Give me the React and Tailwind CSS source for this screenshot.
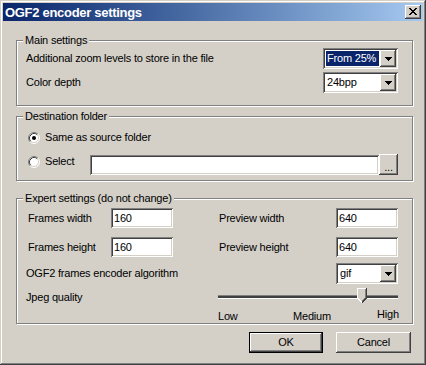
import React from "react";

const raised =
  "shadow-[inset_-1px_-1px_#404040,inset_1px_1px_#ffffff,inset_-2px_-2px_#808080,inset_2px_2px_#d4d0c8]";
const sunken =
  "shadow-[inset_1px_1px_#808080,inset_-1px_-1px_#ffffff,inset_2px_2px_#404040,inset_-2px_-2px_#d4d0c8]";

function Group({ title, className, children }) {
  return (
    <div
      className={`relative ml-[13px] w-[397px] border border-[#808080] shadow-[inset_1px_1px_#ffffff,1px_1px_#ffffff] ${className}`}
    >
      <span className="absolute -top-[8px] left-[6px] bg-[#d4d0c8] px-[2px] leading-[14px]">{title}</span>
      {children}
    </div>
  );
}

function DropArrow() {
  return (
    <div className={`flex h-full w-[16px] items-center justify-center bg-[#d4d0c8] ${raised}`}>
      <svg width="7" height="4" viewBox="0 0 7 4" shapeRendering="crispEdges">
        <path d="M0 0h7v1H0zM1 1h5v1H1zM2 2h3v1H2zM3 3h1v1H3z" fill="#000" />
      </svg>
    </div>
  );
}

function Combo({ value, selected, width }) {
  return (
    <div className={`flex h-[21px] bg-white p-[2px] ${sunken} ${width}`}>
      <div className="flex min-w-0 flex-1 items-center px-[1px]">
        <span
          className={`flex h-[15px] flex-1 items-center px-[1px] ${
            selected ? "bg-[#0a246a] text-white" : "text-black"
          }`}
        >
          {value}
        </span>
      </div>
      <DropArrow />
    </div>
  );
}

function TextBox({ value, width }) {
  return (
    <div className={`flex h-[20px] items-center bg-white px-[3px] ${sunken} ${width}`}>
      <span>{value}</span>
    </div>
  );
}

function Radio({ checked }) {
  return (
    <svg width="12" height="12" viewBox="0 0 12 12" className="shrink-0">
      <circle cx="6" cy="6" r="5" fill="#fff" />
      <path d="M2.11 9.89A5.5 5.5 0 0 1 9.89 2.11" stroke="#808080" fill="none" />
      <path d="M9.89 2.11A5.5 5.5 0 0 1 2.11 9.89" stroke="#ffffff" fill="none" />
      <path d="M2.82 9.18A4.5 4.5 0 0 1 9.18 2.82" stroke="#404040" fill="none" />
      <path d="M9.18 2.82A4.5 4.5 0 0 1 2.82 9.18" stroke="#d4d0c8" fill="none" />
      {checked ? <circle cx="6" cy="6" r="2" fill="#000" /> : null}
    </svg>
  );
}

function Button({ label, isDefault, width }) {
  return (
    <div className={`h-[21px] ${width} ${isDefault ? "border border-black" : ""}`}>
      <div className={`flex h-full w-full items-center justify-center bg-[#d4d0c8] ${raised}`}>{label}</div>
    </div>
  );
}

export default function App() {
  return (
    <div className="h-[365px] w-[426px] bg-[#d4d0c8] p-[3px] font-['Liberation_Sans',Arial,sans-serif] text-[11px] leading-[13px] tracking-[-0.2px] text-black shadow-[inset_-1px_-1px_#404040,inset_1px_1px_#d4d0c8,inset_-2px_-2px_#808080,inset_2px_2px_#ffffff]">
      <div className="flex h-[18px] items-center justify-between bg-linear-to-r from-[#0a246a] to-[#a6caf0] pl-[2px] pr-[2px]">
        <span className="text-[13px] font-bold tracking-[-0.3px] text-white">OGF2 encoder settings</span>
        <div className={`flex h-[14px] w-[16px] items-center justify-center bg-[#d4d0c8] ${raised}`}>
          <svg width="8" height="7" viewBox="0 0 8 7" shapeRendering="crispEdges" className="-mt-[1px]">
            <path
              d="M0 0h2v1H0zM6 0h2v1H6zM1 1h2v1H1zM5 1h2v1H5zM2 2h4v1H2zM3 3h2v1H3zM2 4h4v1H2zM1 5h2v1H1zM5 5h2v1H5zM0 6h2v1H0zM6 6h2v1H6z"
              fill="#000"
            />
          </svg>
        </div>
      </div>

      <Group title="Main settings" className="mt-[19px] h-[66px] pl-[9px] pr-[14px] pt-[7px]">
        <div className="flex h-[21px] items-center justify-between">
          <span>Additional zoom levels to store in the file</span>
          <Combo value="From 25%" selected width="w-[75px]" />
        </div>
        <div className="mt-[3px] flex h-[21px] items-center justify-between">
          <span>Color depth</span>
          <Combo value="24bpp" width="w-[75px]" />
        </div>
      </Group>

      <Group title="Destination folder" className="mt-[10px] h-[65px] pl-[11px] pt-[14px]">
        <div className="flex h-[13px] items-center gap-[5px]">
          <Radio checked />
          <span>Same as source folder</span>
        </div>
        <div className="mt-[10px] flex h-[21px] items-start">
          <div className="mt-[1px] flex h-[13px] items-center gap-[5px]">
            <Radio />
            <span className="w-[45px]">Select</span>
          </div>
          <div className={`mt-[1px] h-[20px] w-[289px] bg-white ${sunken}`} />
          <div className={`flex h-[21px] w-[19px] items-end justify-center bg-[#d4d0c8] pb-[4px] leading-[8px] ${raised}`}>
            <span className="text-[11px]">...</span>
          </div>
        </div>
      </Group>

      <Group title="Expert settings (do not change)" className="mt-[17px] h-[126px] pl-[9px] pt-[9px]">
        <div className="flex h-[20px] items-center">
          <span className="w-[85px] pl-[2px]">Frames width</span>
          <TextBox value="160" width="w-[62px]" />
          <span className="ml-[46px] w-[117px]">Preview width</span>
          <TextBox value="640" width="w-[62px]" />
        </div>
        <div className="mt-[9px] flex h-[20px] items-center">
          <span className="w-[85px] pl-[2px]">Frames height</span>
          <TextBox value="160" width="w-[62px]" />
          <span className="ml-[46px] w-[117px]">Preview height</span>
          <TextBox value="640" width="w-[62px]" />
        </div>
        <div className="mt-[6px] flex h-[21px] items-center">
          <span className="w-[310px]">OGF2 frames encoder algorithm</span>
          <Combo value="gif" width="w-[62px]" />
        </div>
        <div className="mt-[6px] flex h-[14px] items-center">
          <span className="w-[192px]">Jpeg quality</span>
          <div className="relative h-[14px] w-[180px]">
            <div className="mt-[5px] h-[3px] w-full border-t border-[#808080] bg-[#404040] shadow-[0_1px_#ffffff]" />
            <svg
              width="10"
              height="15"
              viewBox="0 0 10 15"
              shapeRendering="crispEdges"
              className="absolute left-[139px] -top-[2px]"
            >
              <path d="M0 0h10v10l-5 5l-5-5z" fill="#d4d0c8" />
              <path d="M0.5 10V0.5H9" stroke="#ffffff" fill="none" />
              <path d="M9.5 0v10l-4.5 4.5" stroke="#404040" fill="none" />
              <path d="M8.5 1v8.6l-3.5 3.5" stroke="#808080" fill="none" />
              <path d="M0.5 10l4.5 4.5" stroke="#ffffff" fill="none" />
            </svg>
          </div>
        </div>
        <div className="mt-[5px] flex h-[14px] items-center pl-[192px]">
          <span className="w-[75px]">Low</span>
          <span className="w-[84px]">Medium</span>
          <span className="-mt-[3px]">High</span>
        </div>
      </Group>

      <div className="ml-[13px] mt-[8px] flex w-[397px] justify-end gap-[13px] pr-[2px]">
        <Button label="OK" isDefault width="w-[74px]" />
        <Button label="Cancel" width="w-[75px]" />
      </div>
    </div>
  );
}
